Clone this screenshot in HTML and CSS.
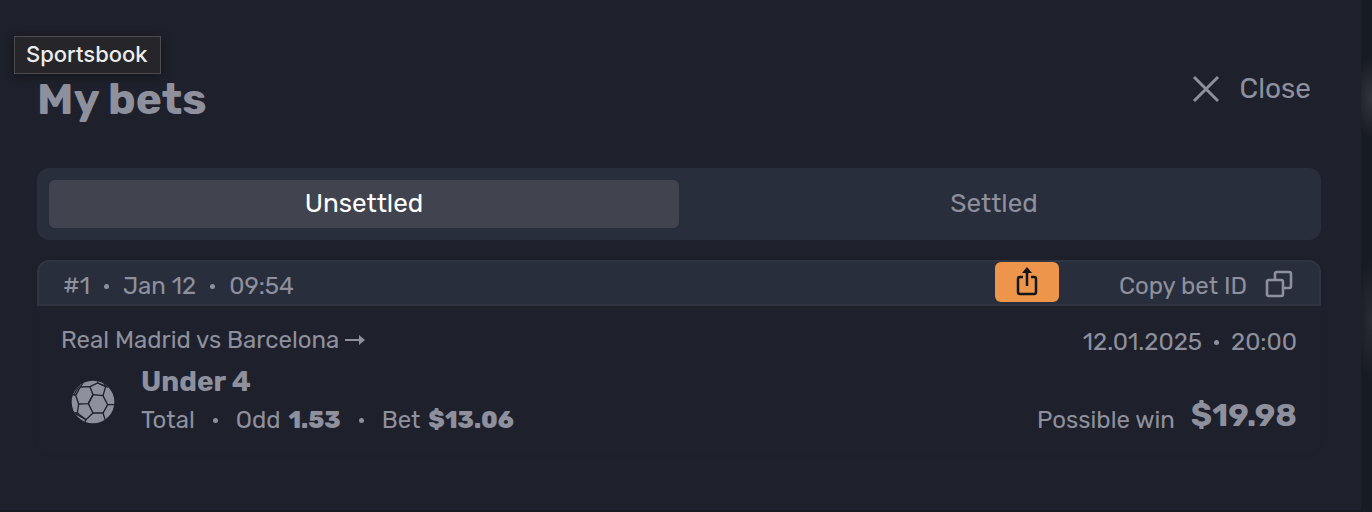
FILE: index.html
```html
<!DOCTYPE html>
<html lang="en">
  <head>
    <meta charset="UTF-8" />
    <meta name="viewport" content="width=device-width, initial-scale=1.0" />
    <title>My bets</title>
    <link rel="stylesheet" href="styles.css">
  </head>
  <body>
    <main class="modal">
      <div class="tooltip" role="tooltip">Sportsbook</div>

      <header class="modal-header">
        <h1 class="title">My bets</h1>
        <button class="close-btn" type="button">
          <svg width="28" height="28" viewBox="0 0 28 28" aria-hidden="true">
            <path d="M2 2L26 26M26 2L2 26" fill="none" stroke="currentColor" stroke-width="3" />
          </svg>
          <span>Close</span>
        </button>
      </header>

      <div class="tabs" role="tablist">
        <button class="tab active" type="button" role="tab" aria-selected="true">Unsettled</button>
        <button class="tab" type="button" role="tab" aria-selected="false">Settled</button>
      </div>

      <article class="bet">
        <div class="bet-header">
          <div class="meta">
            <span>#1</span><i class="dot"></i><span>Jan 12</span><i class="dot"></i><span>09:54</span>
          </div>
          <div class="actions">
            <button class="share-btn" type="button" aria-label="Share">
              <svg width="22" height="30" viewBox="0 0 22 30" aria-hidden="true">
                <path d="M7 10H4Q2 10 2 12V25Q2 27 4 27H18Q20 27 20 25V12Q20 10 18 10H15M11 19V3" fill="none" stroke="currentColor" stroke-width="2.5" />
                <path d="M11 0L16 6H6Z" fill="currentColor" />
              </svg>
            </button>
            <button class="copy-btn" type="button">
              <span>Copy bet ID</span>
              <svg width="28" height="28" viewBox="0 0 28 28" aria-hidden="true">
                <path d="M10 9V4Q10 2 12 2H24Q26 2 26 4V16Q26 18 24 18H19" fill="none" stroke="currentColor" stroke-width="2.6" />
                <rect x="2" y="10" width="16" height="16" rx="2" fill="none" stroke="currentColor" stroke-width="2.6" />
              </svg>
            </button>
          </div>
        </div>

        <div class="bet-body">
          <div class="event-row">
            <a class="event" href="#">
              <span>Real Madrid vs Barcelona</span>
              <svg width="20" height="12" viewBox="0 0 20 12" aria-hidden="true">
                <path d="M0 6H16" fill="none" stroke="currentColor" stroke-width="2" />
                <path d="M14 1L20 6L14 11Z" fill="currentColor" />
              </svg>
            </a>
            <div class="meta">
              <span>12.01.2025</span><i class="dot"></i><span>20:00</span>
            </div>
          </div>

          <div class="pick-row">
            <svg class="ball" width="44" height="44" viewBox="0 0 132 132" aria-hidden="true">
              <defs>
                <clipPath id="ball"><circle cx="66" cy="66" r="64" /></clipPath>
              </defs>
              <circle cx="66" cy="66" r="64" fill="#8e909e" />
              <g clip-path="url(#ball)" fill="none" stroke="#1e202b" stroke-width="4">
                <path d="M28 21L57 20L66 44L52 71L23 72L14 46Z" />
                <path d="M66 44L96 47L110 74L96 99L66 99L52 71Z" />
                <path d="M57 20L80 9L104 20L96 47" />
                <path d="M66 99L45 119L19 99L23 72" />
                <path d="M110 74H132M96 99L104 124M104 20L112 10M80 9L112 22M80 9V0M45 119L38 132M45 119L12 100M19 99L6 98M14 46L0 42M10 42L28 12M28 21L38 6M104 20L98 8" />
              </g>
            </svg>
            <div class="pick">
              <h2 class="pick-name">Under 4</h2>
              <div class="meta wide">
                <span>Total</span><i class="dot"></i><span>Odd <b>1.53</b></span><i class="dot"></i><span>Bet <b>$13.06</b></span>
              </div>
            </div>
            <div class="win">
              <span>Possible win</span>
              <strong class="win-sum">$19.98</strong>
            </div>
          </div>
        </div>
      </article>
    </main>
  </body>
</html>
```
FILE: styles.css
```css
* {
  box-sizing: border-box;
}

html {
  height: 100%;
}

body {
  margin: 0;
  min-height: 100%;
  padding: 0 11px 2px 0;
  display: flex;
  font-family: Rubik, Inter, sans-serif;
  font-size: 24px;
  line-height: 28px;
  color: #8e909e;
  background:
    radial-gradient(ellipse 20px 40px at 100% 98px, #32353c, transparent),
    radial-gradient(ellipse 16px 60px at 100% 320px, #292c35, transparent),
    #171b22;
}

button {
  padding: 0;
  border: none;
  background: none;
  font: inherit;
  color: inherit;
  cursor: pointer;
}

svg {
  flex: none;
  display: block;
}

.modal {
  position: relative;
  flex: 1;
  padding: 68px 40px 56px 37px;
  background: #1e202b;
}

.tooltip {
  position: absolute;
  top: 36px;
  left: 14px;
  padding: 3px 12px 5px 11px;
  border: 1px solid #4b4b4f;
  background: #25252a;
  color: #ececec;
  font-family: Inter, sans-serif;
  font-size: 22px;
  font-weight: 500;
  box-shadow: 0 2px 10px rgba(0, 0, 0, 0.4);
}

.modal-header {
  display: flex;
  justify-content: space-between;
  align-items: flex-start;
  height: 100px;
}

.title {
  margin: 5px 0 0;
  font-size: 44px;
  line-height: 52px;
}

.close-btn {
  display: flex;
  align-items: center;
  gap: 20px;
  height: 42px;
  padding-right: 10px;
  font-size: 28px;
}

.tabs {
  display: flex;
  padding: 12px;
  border-radius: 12px;
  background: #292e3c;
}

.tab {
  flex: 1;
  height: 48px;
  border-radius: 6px;
  font-size: 26px;
}

.tab.active {
  background: #41434f;
  color: #fff;
}

.bet {
  margin-top: 20px;
  border-radius: 12px;
  box-shadow: 0 0 4px rgba(0, 0, 0, 0.08);
}

.bet-header {
  display: flex;
  justify-content: space-between;
  height: 46px;
  padding: 0 26px 0 24px;
  border: 2px solid #303544;
  border-radius: 12px 12px 0 0;
  background: #292e3c;
}

.meta {
  display: flex;
  align-items: center;
  gap: 14px;
}

.meta.wide {
  gap: 18px;
}

.meta b {
  margin-left: 2px;
  font-weight: 800;
}

.dot {
  width: 5px;
  height: 5px;
  border-radius: 50%;
  background: currentColor;
}

.bet-header .meta {
  padding-top: 6px;
}

.actions {
  display: flex;
  gap: 60px;
}

.share-btn {
  display: flex;
  justify-content: center;
  align-items: center;
  width: 64px;
  height: 40px;
  border-radius: 6px;
  background: #ed954b;
  color: #15161c;
}

.copy-btn {
  display: flex;
  align-items: center;
  gap: 18px;
  padding-top: 2px;
}

.copy-btn span {
  padding-top: 4px;
}

.bet-body {
  padding: 20px 24px;
}

.event-row {
  display: flex;
  justify-content: space-between;
  align-items: flex-start;
}

.event-row .meta {
  gap: 12px;
  padding-top: 2px;
}

.event {
  display: flex;
  align-items: center;
  gap: 6px;
  color: inherit;
  text-decoration: none;
}

.pick-row {
  display: flex;
  align-items: flex-end;
  margin-top: 10px;
}

.ball {
  margin: 0 26px 10px 10px;
}

.pick-name {
  margin: 0 0 8px;
  font-size: 28px;
  line-height: 32px;
}

.win {
  display: flex;
  align-items: flex-end;
  gap: 16px;
  margin-left: auto;
}

.win-sum {
  font-size: 32px;
  line-height: 38px;
}
```
